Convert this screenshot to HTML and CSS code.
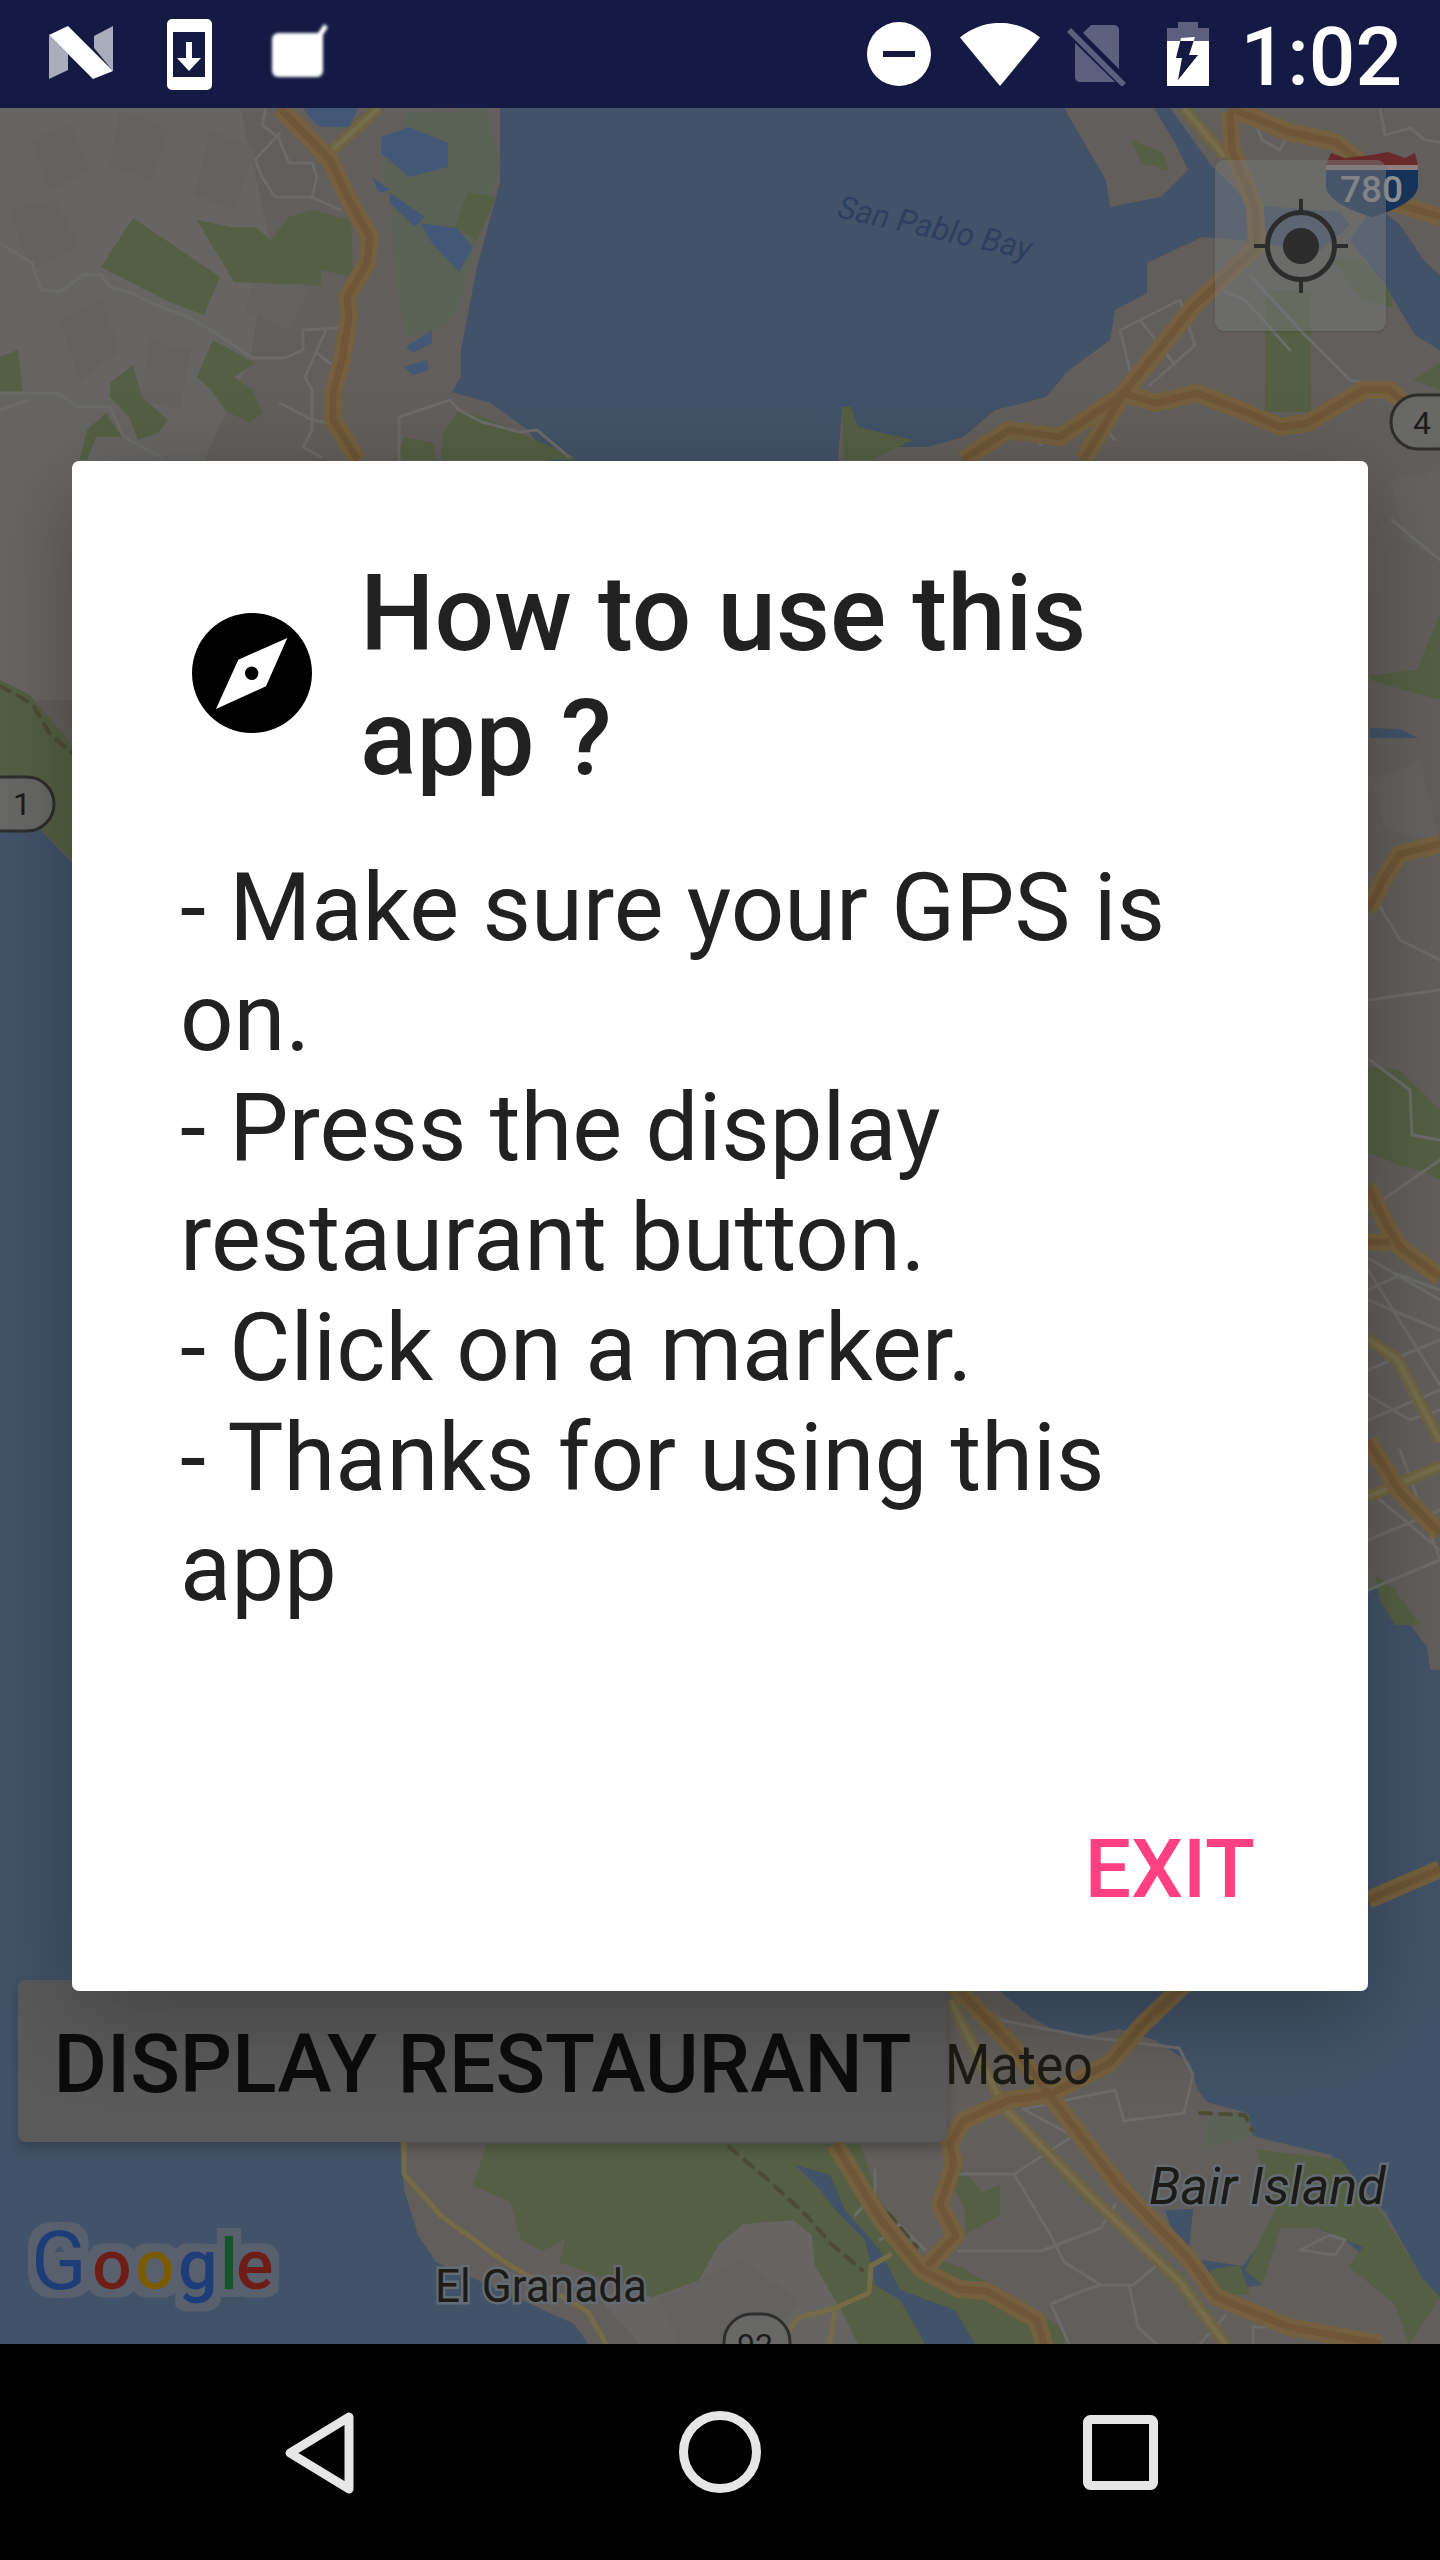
FILE: index.html
```html
<!DOCTYPE html>
<html lang="en">
<head>
<meta charset="utf-8">
<title>How to use this app</title>
<link rel="stylesheet" href="styles.css">
</head>
<body>
<div class="phone">
  <header class="statusbar">
    <div class="status-left">
      <svg class="ico ico-n" viewBox="0 0 80 60"><path class="grey" d="M4 12V56L23 47V31Z"/><path class="grey" d="M68 3L49 13V25L68 48Z"/><path class="white" d="M4 12L23 3L68 48L48 56Z"/></svg>
      <svg class="ico ico-dl" viewBox="0 0 45 71"><path class="white" fill-rule="evenodd" d="M5 0H40a5 5 0 0 1 5 5V66a5 5 0 0 1-5 5H5a5 5 0 0 1-5-5V5a5 5 0 0 1 5-5ZM6 13V58H38V13ZM19 23H25V39H34L22 52L10 39H19Z"/></svg>
      <svg class="ico ico-blur" viewBox="0 0 56 60"><path class="white" d="M6 11H46L52 2L56 5L51 13V49a6 6 0 0 1-6 6H6a6 6 0 0 1-6-6V17a6 6 0 0 1 6-6Z"/></svg>
    </div>
    <div class="status-right">
      <svg class="ico ico-dnd" viewBox="0 0 64 64"><path class="white" fill-rule="evenodd" d="M32 0a32 32 0 1 1 0 64a32 32 0 1 1 0-64ZM16 29V35H48V29Z"/></svg>
      <svg class="ico ico-wifi" viewBox="0 0 80 63"><path class="white" d="M0 14.500C24 -5 56 -5 80 14.500L40 63Z"/></svg>
      <svg class="ico ico-sim" viewBox="0 0 60 60"><path class="dim" d="M25 1H48a5 5 0 0 1 5 5V45L17 9Z"/><path class="dim" d="M9 19V53a5 5 0 0 0 5 5H49L9 19Z"/><path class="dim" d="M1 8L5 4L60 59L56 63Z"/></svg>
      <svg class="ico ico-batt" viewBox="0 0 42 64"><path class="dim" d="M11 0H31V6H42V19H0V6H11Z"/><path class="white" fill-rule="evenodd" d="M0 19H42V64H0ZM14 16L28 15L22 33H31L11 58L15 36H9Z"/></svg>
      <span class="clock">1:02</span>
    </div>
  </header>

  <main class="map">
    <svg class="map-art" viewBox="0 108 1440 2236" preserveAspectRatio="none">
      <defs>
        <filter id="halo" x="-10%" y="-20%" width="120%" height="140%">
          <feMorphology in="SourceAlpha" operator="dilate" radius="8" result="fat"/>
          <feFlood flood-color="#58616e"/>
          <feComposite in2="fat" operator="in" result="ring"/>
          <feMerge><feMergeNode in="ring"/><feMergeNode in="SourceGraphic"/></feMerge>
        </filter>
        <path id="r1" d="M280 108L330 160L349 200L370 237L367 263L347 297L349 317L342 360L333 393L333 420L358 460"/>
        <path id="r2" d="M1230 112L1232 150L1255 207L1257 247L1193 307L1124 393L1083 460"/>
        <path id="r3" d="M1230 108L1289 132L1335 142L1358 160L1395 203L1440 217"/>
        <path id="r4" d="M1119 392L1156 403L1197 393L1248 413L1280 427L1308 423L1363 390L1390 390L1412 410L1440 420"/>
        <path id="r5" d="M1119 397L1060 437L1009 430L963 460"/>
        <path id="r6" d="M1368 910L1383 880L1400 854L1440 844"/>
        <path id="r7" d="M1368 1186L1387 1226L1400 1247L1440 1277"/>
        <path id="r8" d="M1368 1242L1390 1242"/>
        <path id="r9" d="M1368 1441L1400 1492L1440 1533"/>
        <path id="r10" d="M1368 1900L1440 1869"/>
        <path id="ra" d="M954 1985L1014 2048L1055 2102L1119 2186L1188 2258L1216 2297L1289 2327L1381 2344"/>
        <path id="rb" d="M1184 1985L1142 2025L1110 2063L1051 2094L1009 2100L963 2121L950 2144L954 2163L940 2205L956 2236L927 2266"/>
        <path id="rc" d="M835 2144L881 2220L922 2270L959 2289L986 2291L1037 2320L1046 2350"/>
        <path id="o1" d="M330 152L379 108"/>
        <path id="o2" d="M1184 108L1225 157"/>
        <path id="o3" d="M1368 1339L1397 1359L1440 1441"/>
        <path id="o4" d="M1368 1497L1440 1466"/>
        <path id="o5" d="M950 2000L1005 2109L1087 2193L1179 2281L1230 2350"/>
      </defs>
      <rect class="land" x="0" y="108" width="1440" height="2236"/>
      <path class="land-light" d="M0 108H240L270 240L250 360L200 470L72 700H0Z"/>
      <path class="land-light" d="M720 2243L743 2224L793 2220L812 2235L815 2266L844 2315L858 2344H640L600 2300Z"/>
      <g class="terrain">
        <path d="M30 140L70 125L90 170L50 190Z"/>
        <path d="M120 110L170 130L150 180L110 165Z"/>
        <path d="M10 210L55 200L80 245L30 270Z"/>
        <path d="M210 130L255 150L235 210L195 195Z"/>
        <path d="M60 320L100 300L120 350L80 380Z"/>
        <path d="M150 340L190 350L180 410L140 400Z"/>
        <path d="M260 255L310 290L290 330L245 310Z"/>
        <path d="M1390 480L1440 470V560L1405 540Z"/>
        <path d="M1372 780L1420 760L1440 840L1385 830Z"/>
        <path d="M660 2300L740 2260L800 2300L760 2344H680Z"/>
      </g>
      <path class="water" d="M500 108H1064L1106 180L1110 207L1161 197L1188 170L1175 143L1154 108H1170L1211 165L1250 205L1340 212L1350 225L1317 253L1243 240L1202 237L1147 263L1147 293L1115 310L1110 340L1069 370L1046 397L995 410L963 437L927 447L871 447L842 407L835 500H574L528 430L491 403L452 392L461 377L461 350L477 267L500 183Z"/>
      <path class="water" d="M1375 205L1400 225L1425 262L1440 275V350L1415 335L1400 310L1385 285L1350 240Z"/>
      <path class="water" d="M0 829H40L72 863L120 880V1900L400 1980L400 2144L404 2190L418 2235L436 2262L500 2290L574 2324L588 2344H0Z"/>
      <path class="water" d="M1000 1991L1032 2018L1060 2033L1090 2035L1119 2029L1155 2040L1190 2063L1198 2090L1207 2102L1248 2113L1253 2136L1331 2155L1386 2213L1422 2278L1440 2300V1670L1430 1670L1427 1647L1410 1625L1393 1620L1380 1580L1368 1594V1960H1000Z"/>
      <path class="water" d="M1193 2209L1188 2258L1243 2266L1271 2228L1317 2220L1345 2240L1370 2262L1400 2290L1395 2304L1349 2266L1363 2247L1317 2228L1280 2228L1262 2285L1230 2290L1200 2280L1175 2240L1165 2210Z"/>
      <path class="water" d="M1370 728L1400 729L1418 738H1370Z"/>

      <g class="marsh">
        <path d="M408 113L487 110L500 167L477 240L459 307L445 327L404 337L395 260L390 197L381 167Z"/>
        <path d="M1210 2115L1248 2113L1253 2136L1200 2150Z"/>
      </g>
      <g class="green">
        <path d="M133 218L220 277L204 315L165 300L133 283L101 267Z"/>
        <path d="M197 220L234 282L321 285L321 270L353 277L351 220L312 210L289 217L271 240L255 227L230 227Z"/>
        <path d="M0 357L18 350L23 393H0Z"/>
        <path d="M213 340L255 363L234 377L253 390L262 413L250 423L225 410L211 390L197 377Z"/>
        <path d="M133 365L142 397L168 420L158 433L138 440L129 417L110 397L110 383Z"/>
        <path d="M106 413L122 437L96 437L87 460L80 460L87 430Z"/>
        <path d="M459 410L491 420L574 457V460H441L443 433Z"/>
        <path d="M395 460L404 437L434 443L436 460Z"/>
        <path d="M468 192L496 197L477 240L455 227Z"/>
        <path d="M1131 140L1163 153L1168 170L1142 163Z"/>
        <path d="M1265 290H1311V412H1265Z"/>
        <path d="M1326 257L1363 260L1390 293L1393 307L1363 300L1340 270Z"/>
        <path d="M1440 363L1413 380L1440 390Z"/>
        <path d="M842 407L851 407L858 427L913 440L871 460H844Z"/>
        <path d="M0 680L30 695L72 745V860L40 829H0Z"/>
        <path d="M1370 675L1417 670L1440 614V700L1370 680Z"/>
        <path d="M1368 1067L1400 1070L1440 1110V1180L1420 1170L1400 1165L1368 1152Z"/>
        <path d="M1375 1575L1395 1590L1420 1625L1395 1625L1380 1600Z"/>
        <path d="M487 2144L473 2186L510 2201L521 2239L542 2251L565 2239L560 2262L652 2297L698 2281L720 2243L743 2224L793 2220L812 2235L815 2266L844 2315L858 2344H1064V2331L1037 2312L959 2266L920 2255L880 2200L860 2144Z"/>
        <path d="M958 2165L985 2195L965 2210L955 2190Z"/>
        <path d="M965 2200L1000 2185L1000 2215L965 2235Z"/>
        <path d="M1210 2270L1240 2265L1250 2295L1215 2295Z"/>
        <path d="M1257 2150L1340 2159L1386 2220L1422 2278L1440 2297L1409 2344L1395 2304L1349 2266L1363 2247L1317 2228L1280 2228L1262 2285L1245 2270L1275 2210Z"/>
      </g>
      <path class="water" d="M795 2165L830 2175L845 2210L880 2250L900 2290L955 2310L975 2344H925L900 2300L875 2285L865 2240L840 2215L820 2190Z"/>
      <g class="pond">
        <path d="M390 193L425 217L415 227L390 203Z"/>
        <path d="M420 223L457 228L473 247L459 272L432 243Z"/>
        <path d="M372 177L390 190L379 193Z"/>
        <path d="M381 137L409 127L448 143L448 167L409 177L381 153Z"/>
        <path d="M303 108H358L349 127L321 127L312 120Z"/>
        <path d="M406 347L432 330V343L413 353Z"/>
        <path d="M404 367L427 360L429 370L413 375Z"/>
        <path d="M85 665L72 680V700Z"/>
      </g>
      <g class="minor">
        <path d="M0 243L32 263L41 290L60 292L83 275H101L110 287L133 293L151 303L188 317L211 330L253 358H285L303 350V330L340 328"/>
        <path d="M317 353L335 367M326 330L305 377L312 390V430L303 447L321 457"/>
        <path d="M0 393H57L78 407H110L124 437L161 457M0 410L28 400M280 403L312 420L330 423"/>
        <path d="M280 133L255 160L262 177L275 197H312L340 210M266 108L262 125L278 137L289 163H312L317 177L312 197"/>
        <path d="M399 460V417L450 400L459 410L482 422L519 432L537 430L569 457"/>
        <path d="M1250 108L1262 140L1280 150L1290 130M1380 108L1385 135L1410 128L1425 140L1440 142"/>
        <path d="M1135 390L1120 330L1180 300L1195 345L1150 385M1140 320L1175 365M1040 445L1090 410L1115 440M1250 275L1300 330L1350 380L1375 385M1210 285L1245 300L1290 350"/>
        <path d="M1392 520L1440 560M1370 890L1400 940L1440 960M1368 1000L1440 990M1370 1060L1410 1090L1412 1135L1440 1140"/>
        <path d="M1368 1210L1440 1160M1368 1258L1440 1300M1368 1290L1400 1275L1440 1290M1368 1300L1440 1330M1368 1370L1440 1340M1368 1420L1440 1390M1368 1270L1440 1385M1368 1395L1410 1420L1440 1410M1368 1490L1440 1550M1368 1540L1440 1510M1368 1590L1440 1560M1400 1450L1440 1560"/>
        <path d="M954 2000L1005 2021L1087 2037L1179 2048L1193 2075L1184 2113L1124 2121L1115 2090L1023 2109L1073 2136L1014 2174L954 2174"/>
        <path d="M1014 2174L1051 2236L1064 2262L1101 2285H1133L1156 2266M959 2251H1041L1101 2228L1115 2205M1101 2285L1087 2289L1051 2304L1069 2344M1129 2285L1138 2327L1156 2344M1225 2316L1200 2344M1253 2344V2327H1289"/>
        <path d="M875 2170V2195L855 2215M880 2240L900 2225L925 2250M1300 2250L1330 2235L1345 2240L1335 2255Z"/>
      </g>
      <g class="thin">
        <path d="M404 2144V2174L441 2216L505 2262L588 2312L606 2344"/>
        <path d="M890 2255L871 2266L869 2293L835 2308L830 2344M835 2308L798 2318L780 2344"/>
      </g>
      <g class="dash">
        <path d="M729 2147L766 2178L807 2216L830 2243L862 2270M888 2213L917 2247"/>
        <path d="M0 686L17 695L33 705L50 734L72 753"/>
        <path d="M1200 2113L1245 2115L1252 2130"/>
      </g>
      <g class="ol-o"><use href="#o1"/><use href="#o2"/><use href="#o3"/><use href="#o4"/><use href="#o5"/></g>
      <g class="ol-i"><use href="#o1"/><use href="#o2"/><use href="#o3"/><use href="#o4"/><use href="#o5"/></g>
      <g class="hw-o"><use href="#r1"/><use href="#r2"/><use href="#r3"/><use href="#r4"/><use href="#r5"/><use href="#r6"/><use href="#r7"/><use href="#r8"/><use href="#r9"/><use href="#r10"/><use href="#ra"/><use href="#rb"/><use href="#rc"/></g>
      <g class="hw-i"><use href="#r1"/><use href="#r2"/><use href="#r3"/><use href="#r4"/><use href="#r5"/><use href="#r6"/><use href="#r7"/><use href="#r8"/><use href="#r9"/><use href="#r10"/><use href="#ra"/><use href="#rb"/><use href="#rc"/></g>

      <path class="shield-blue" d="M1326 170H1418V185C1418 200 1395 210 1372 217C1349 210 1326 200 1326 185Z"/>
      <path class="shield-band" d="M1326 165H1418V170H1326Z"/>
      <path class="shield-red" d="M1326 165L1331 153L1345 158L1372 155L1388 152L1405 158L1415 153L1418 165Z"/>
      <text class="shield-text" x="1340" y="202">780</text>

      <rect class="badge" x="-30" y="777" width="84" height="54" rx="27"/>
      <text class="badge-text" x="13" y="815">1</text>
      <rect class="badge" x="1391" y="395" width="90" height="54" rx="27"/>
      <text class="badge-text" x="1413" y="434">4</text>
      <rect class="badge" x="724" y="2314" width="66" height="60" rx="28"/>
      <text class="badge-text" x="737" y="2356">92</text>

      <text class="bay-label" transform="translate(836 217) rotate(12.500)">San Pablo Bay</text>
      <text class="place" x="435" y="2302" textLength="212" lengthAdjust="spacingAndGlyphs">El Granada</text>
      <text class="place place-lg" x="945" y="2084" textLength="148" lengthAdjust="spacingAndGlyphs">Mateo</text>
      <text class="place place-it" x="1149" y="2204">Bair Island</text>
      <g filter="url(#halo)"><text class="goog"><tspan class="g-blue g-cap" x="31" y="2289">G</tspan><tspan class="g-red" x="92" y="2289">o</tspan><tspan class="g-yel" x="135" y="2289">o</tspan><tspan class="g-blue" x="178" y="2289">g</tspan><tspan class="g-grn" x="220" y="2289">l</tspan><tspan class="g-red" x="236" y="2289">e</tspan></text></g>
    </svg>

    <button class="locate" type="button" aria-label="My location">
      <svg class="locate-ico" viewBox="0 0 96 96"><circle cx="48" cy="48" r="33.500" class="target-ring"/><circle cx="48" cy="48" r="18" class="target-dot"/><path class="target-tick" d="M48 1V13M48 83V95M1 48H13M83 48H95"/></svg>
    </button>
    <button class="display-btn" type="button">DISPLAY RESTAURANT</button>

    <div class="overlay">
      <section class="dialog" role="dialog">
        <div class="dialog-head">
          <svg class="compass" viewBox="0 0 120 120"><path fill-rule="evenodd" d="M60 0a60 60 0 1 1 0 120a60 60 0 1 1 0-120ZM95.300 25L46.300 46.700L24 96L74 73.300ZM59.700 53.600a6.700 6.700 0 1 1 0 13.400a6.700 6.700 0 1 1 0-13.400Z"/></svg>
          <h1 class="dialog-title">How to use this app ?</h1>
        </div>
        <p class="dialog-body">- Make sure your GPS is on.<br>- Press the display restaurant button.<br>- Click on a marker.<br>- Thanks for using this app</p>
        <div class="dialog-actions"><button class="exit" type="button">EXIT</button></div>
      </section>
    </div>
  </main>

  <nav class="navbar">
    <svg class="nav-ico nav-back" viewBox="0 0 78 90"><path d="M10 45L69 9V81Z"/></svg>
    <svg class="nav-ico nav-home" viewBox="0 0 84 84"><circle cx="42" cy="42" r="36.500"/></svg>
    <svg class="nav-ico nav-recent" viewBox="0 0 75 75"><rect x="4.500" y="4.500" width="66" height="66" rx="3"/></svg>
  </nav>
</div>
</body>
</html>
```
FILE: styles.css
```css
* { box-sizing: border-box; }
html, body { margin: 0; padding: 0; background: #000; }
body { font-family: Roboto, "Noto Sans", sans-serif; }
.phone { width: 1440px; height: 2560px; display: flex; flex-direction: column; overflow: hidden; }

/* status bar */
.statusbar { height: 108px; flex: none; background: #141a43; display: flex; justify-content: space-between; align-items: center; padding: 0 38px 0 45px; }
.status-left, .status-right { display: flex; align-items: center; }
.ico { display: block; flex: none; }
.white { fill: #fff; }
.grey { fill: #a9acbb; }
.dim { fill: #5c607e; }
.ico-n { width: 80px; height: 60px; margin-right: 42px; margin-top: -2px; }
.ico-dl { width: 45px; height: 71px; margin-right: 60px; }
.ico-blur { width: 56px; height: 60px; margin-top: -4px; filter: blur(1.600px); }
.ico-dnd { width: 64px; height: 64px; margin-right: 29px; }
.ico-wifi { width: 80px; height: 63px; margin-right: 26px; }
.ico-sim { width: 60px; height: 64px; margin-right: 41px; }
.ico-batt { width: 42px; height: 64px; margin-right: 32px; }
.clock { color: #fff; font-size: 82px; line-height: 1; font-weight: 500; margin-top: 5px; }

/* map */
.map { flex: 1; position: relative; background: #63605c; overflow: hidden; }
.map-art { position: absolute; inset: 0; width: 100%; height: 100%; display: block; }
.land { fill: #615e5b; }
.land-light { fill: #666563; }
.terrain path { fill: #636260; }
.water { fill: #425268; }
.marsh path { fill: #5a6255; }
.green path { fill: #545f43; }
.pond path { fill: #435876; }
.minor path, .thin path, .dash path { fill: none; stroke-linejoin: round; stroke-linecap: round; }
.minor path { stroke: #6b6b6a; stroke-width: 3px; }
.thin path { stroke: #766b47; stroke-width: 5px; }
.dash path { stroke: #4c4c36; stroke-width: 4px; stroke-dasharray: 11 9; }
.hw-o, .hw-i, .ol-o, .ol-i { fill: none; stroke-linejoin: round; stroke-linecap: butt; }
.hw-o { stroke: #74603e; stroke-width: 18px; }
.hw-i { stroke: #6e5636; stroke-width: 7px; }
.ol-o { stroke: #6d6441; stroke-width: 12px; }
.ol-i { stroke: #746d4e; stroke-width: 5px; }
.shield-blue { fill: #16335a; }
.shield-band { fill: #8f7d7d; }
.shield-red { fill: #6a2a2b; }
.shield-text { fill: #8d8f91; font: 500 37px Roboto, sans-serif; }
.badge { fill: #686866; stroke: #2e2e2e; stroke-width: 3px; }
.badge-text { fill: #1c1c1c; font: 400 32px Roboto, sans-serif; }
.bay-label { fill: #2d3f5e; font: italic 400 32px Roboto, sans-serif; }
.place { fill: #1c1b16; font: 400 46px Roboto, sans-serif; paint-order: stroke; stroke: #646b73; stroke-width: 5px; }
.place-lg { font-size: 56px; stroke: none; }
.place-it { font-style: italic; font-size: 52px; }
.goog { font: 500 70px Roboto, sans-serif; }
.g-cap { font-size: 82px; font-weight: 400; }
.g-blue { fill: #1d3e78; }
.g-red { fill: #6d1f18; }
.g-yel { fill: #7a5b00; }
.g-grn { fill: #14542a; }

.locate { position: absolute; left: 1215px; top: 52px; width: 171px; height: 171px; padding: 0; border: 0; border-radius: 9px; background: rgba(118, 120, 122, .5); display: flex; align-items: center; justify-content: center; box-shadow: 0 1px 3px rgba(0, 0, 0, .15); }
.locate-ico { width: 96px; height: 96px; display: block; }
.target-ring { fill: none; stroke: #2c2c2c; stroke-width: 5px; }
.target-dot { fill: #2c2c2c; }
.target-tick { fill: none; stroke: #2c2c2c; stroke-width: 4px; }

.display-btn { position: absolute; left: 18px; top: 1872px; width: 929px; height: 162px; padding: 6px 0 0; border: 0; border-radius: 7px; background: #5a5a5a; color: #0c0c0c; font: 500 82px Roboto, sans-serif; box-shadow: 0 7px 12px rgba(0, 0, 0, .2); }

/* dialog */
.overlay { position: absolute; inset: 0; display: flex; align-items: center; justify-content: center; padding: 0 72px; }
.dialog { width: 100%; height: 1530px; background: #fff; border-radius: 7px; box-shadow: 0 24px 90px rgba(0, 0, 0, .28); padding: 84px 108px 0; color: #212121; display: flex; flex-direction: column; }
.dialog-head { display: flex; align-items: center; gap: 48px; padding-left: 12px; }
.compass { width: 120px; height: 120px; flex: none; fill: #000; }
.dialog-title { margin: 0; padding-top: 8px; font-size: 105px; line-height: 124px; font-weight: 500; }
.dialog-body { margin: 52px 0 0; font-size: 94px; line-height: 110px; font-weight: 400; }
.dialog-actions { margin-top: auto; display: flex; justify-content: flex-end; padding: 0 5px 81px 0; }
.exit { padding: 0; border: 0; background: none; color: #ff4081; font: 500 82px Roboto, sans-serif; line-height: 1; }

/* nav */
.navbar { height: 216px; flex: none; background: #000; position: relative; }
.nav-ico { position: absolute; display: block; fill: none; stroke: #e6e6e6; stroke-width: 9px; stroke-linejoin: round; }
.nav-back { left: 280px; top: 64px; width: 78px; height: 90px; }
.nav-home { left: 678px; top: 66px; width: 84px; height: 84px; }
.nav-recent { left: 1083px; top: 71px; width: 75px; height: 75px; }
```
